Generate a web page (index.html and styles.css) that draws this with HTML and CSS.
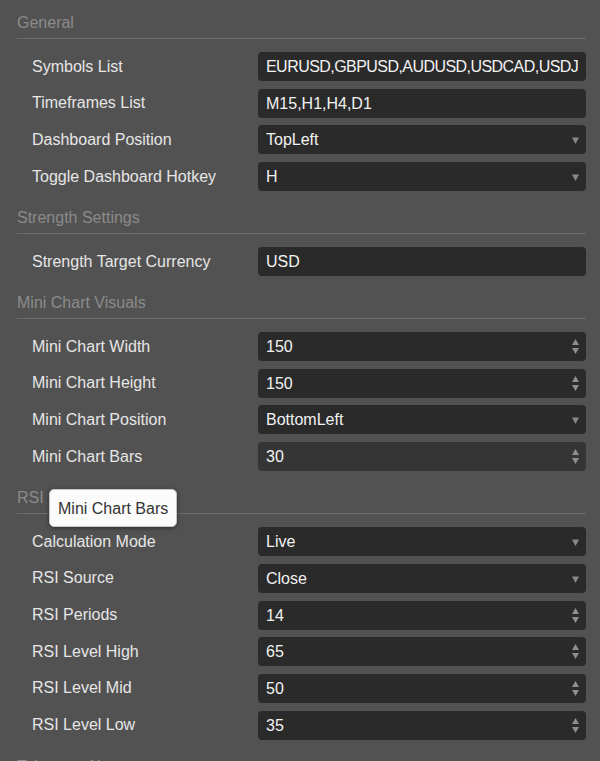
FILE: index.html
```html
<!DOCTYPE html>
<html lang="en">
<head>
<meta charset="utf-8">
<title>Inputs</title>
<link rel="stylesheet" href="styles.css">
</head>
<body>
<div class="panel">
  <section class="group">
    <div class="group-title">General</div>
    <div class="rows">
      <div class="row"><span class="label">Symbols List</span><div class="field"><span class="value dense">EURUSD,GBPUSD,AUDUSD,USDCAD,USDJPY</span></div></div>
      <div class="row"><span class="label">Timeframes List</span><div class="field"><span class="value">M15,H1,H4,D1</span></div></div>
      <div class="row"><span class="label">Dashboard Position</span><div class="field"><span class="value">TopLeft</span><svg class="drop" viewBox="0 0 7 7"><polygon points="0,0.5 7,0.5 3.5,7"/></svg></div></div>
      <div class="row"><span class="label">Toggle Dashboard Hotkey</span><div class="field"><span class="value">H</span><svg class="drop" viewBox="0 0 7 7"><polygon points="0,0.5 7,0.5 3.5,7"/></svg></div></div>
    </div>
  </section>
  <section class="group">
    <div class="group-title">Strength Settings</div>
    <div class="rows">
      <div class="row"><span class="label">Strength Target Currency</span><div class="field"><span class="value">USD</span></div></div>
    </div>
  </section>
  <section class="group">
    <div class="group-title">Mini Chart Visuals</div>
    <div class="rows">
      <div class="row"><span class="label">Mini Chart Width</span><div class="field"><span class="value">150</span><svg class="spin" viewBox="0 0 7 16"><polygon points="3.5,0 7,6 0,6"/><polygon points="0,9 7,9 3.5,15"/></svg></div></div>
      <div class="row"><span class="label">Mini Chart Height</span><div class="field"><span class="value">150</span><svg class="spin" viewBox="0 0 7 16"><polygon points="3.5,0 7,6 0,6"/><polygon points="0,9 7,9 3.5,15"/></svg></div></div>
      <div class="row"><span class="label">Mini Chart Position</span><div class="field"><span class="value">BottomLeft</span><svg class="drop" viewBox="0 0 7 7"><polygon points="0,0.5 7,0.5 3.5,7"/></svg></div></div>
      <div class="row"><span class="label">Mini Chart Bars</span><div class="field hover"><span class="value">30</span><svg class="spin" viewBox="0 0 7 16"><polygon points="3.5,0 7,6 0,6"/><polygon points="0,9 7,9 3.5,15"/></svg></div></div>
    </div>
  </section>
  <section class="group">
    <div class="group-title">RSI Settings</div>
    <div class="rows">
      <div class="row"><span class="label">Calculation Mode</span><div class="field"><span class="value">Live</span><svg class="drop" viewBox="0 0 7 7"><polygon points="0,0.5 7,0.5 3.5,7"/></svg></div></div>
      <div class="row"><span class="label">RSI Source</span><div class="field"><span class="value">Close</span><svg class="drop" viewBox="0 0 7 7"><polygon points="0,0.5 7,0.5 3.5,7"/></svg></div></div>
      <div class="row"><span class="label">RSI Periods</span><div class="field"><span class="value">14</span><svg class="spin" viewBox="0 0 7 16"><polygon points="3.5,0 7,6 0,6"/><polygon points="0,9 7,9 3.5,15"/></svg></div></div>
      <div class="row"><span class="label">RSI Level High</span><div class="field"><span class="value">65</span><svg class="spin" viewBox="0 0 7 16"><polygon points="3.5,0 7,6 0,6"/><polygon points="0,9 7,9 3.5,15"/></svg></div></div>
      <div class="row"><span class="label">RSI Level Mid</span><div class="field"><span class="value">50</span><svg class="spin" viewBox="0 0 7 16"><polygon points="3.5,0 7,6 0,6"/><polygon points="0,9 7,9 3.5,15"/></svg></div></div>
      <div class="row"><span class="label">RSI Level Low</span><div class="field"><span class="value">35</span><svg class="spin" viewBox="0 0 7 16"><polygon points="3.5,0 7,6 0,6"/><polygon points="0,9 7,9 3.5,15"/></svg></div></div>
    </div>
  </section>
  <section class="group">
    <div class="group-title">Telegram Alerts</div>
  </section>
  <div class="tooltip">Mini Chart Bars</div>
</div>
</body>
</html>
```

FILE: styles.css
```css
html, body {
  margin: 0;
  padding: 0;
  height: 100%;
  overflow: hidden;
  background: #525252;
}

body {
  font-family: "Liberation Sans", Arial, sans-serif;
  font-size: 16px;
  color: #e4e4e4;
}

.panel {
  position: relative;
  padding: 14px 14px 0 17px;
}

.group-title {
  line-height: 18px;
  padding-bottom: 6px;
  border-bottom: 1px solid #6c6c6c;
  color: #8b8b8b;
  white-space: nowrap;
}

.rows {
  display: flex;
  flex-direction: column;
  gap: 7.7px;
  padding: 13px 0 18px 15px;
}

.row {
  display: flex;
  align-items: center;
}

.label {
  width: 226px;
  flex: none;
  color: #e6e6e6;
  white-space: nowrap;
}

.field {
  flex: 1;
  min-width: 0;
  height: 29px;
  display: flex;
  align-items: center;
  background: #2a2a2a;
  border-radius: 4px;
  padding: 0 7px 0 8px;
}

.field.hover {
  background: #353535;
}

.value {
  flex: 1;
  min-width: 0;
  overflow: hidden;
  white-space: nowrap;
  color: #f2f2f2;
  line-height: 29px;
}

.value.dense {
  letter-spacing: -0.55px;
}

.drop {
  width: 7px;
  height: 7px;
  flex: none;
  fill: #8a8a8a;
  margin-top: 2px;
}

.spin {
  width: 7px;
  height: 16px;
  flex: none;
  fill: #8e8e8e;
  margin-top: 1px;
}

.tooltip {
  position: absolute;
  left: 49px;
  top: 489px;
  padding: 10px 8px 8px;
  line-height: 18px;
  background: #fbfbfb;
  color: #333333;
  border: 1px solid #c4c4c4;
  border-radius: 5px;
  box-shadow: 0 1px 4px rgba(0, 0, 0, 0.45);
  white-space: nowrap;
}
```
